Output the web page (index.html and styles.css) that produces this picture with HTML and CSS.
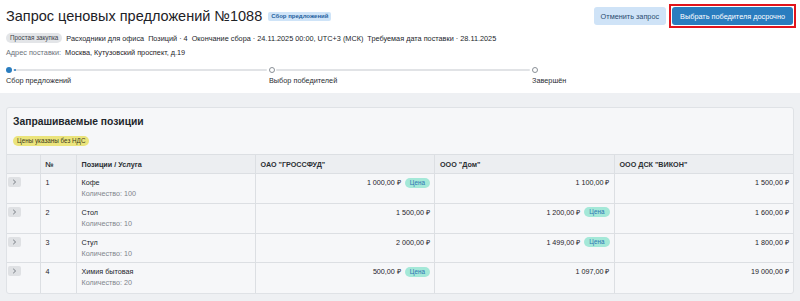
FILE: index.html
```html
<!DOCTYPE html>
<html lang="ru">
<head>
    <meta charset="UTF-8">
    <meta name="viewport" content="width=device-width, initial-scale=1.0">
    <title>Запрос ценовых предложений №1088</title>
    <link rel="stylesheet" href="styles.css">
</head>
<body>
    <div class="page-header">
        <div class="title-row">
            <div class="title-left">
                <h1>Запрос ценовых предложений №1088</h1>
                <span class="status-badge">Сбор предложений</span>
            </div>
            <div class="actions">
                <button class="btn btn-light">Отменить запрос</button>
                <span class="btn-outline"><button class="btn btn-primary">Выбрать победителя досрочно</button></span>
            </div>
        </div>

        <div class="meta-row">
            <span class="type-tag">Простая закупка</span>
            <span>Расходники для офиса</span>
            <span>Позиций · 4</span>
            <span>Окончание сбора · 24.11.2025 00:00, UTC+3 (МСК)</span>
            <span>Требуемая дата поставки · 28.11.2025</span>
        </div>

        <div class="address-row">
            <span class="muted">Адрес поставки:</span>
            <span>Москва, Кутузовский проспект, д.19</span>
        </div>

        <div class="stepper">
            <div class="step">
                <div class="step-track">
                    <span class="dot dot-active"></span>
                    <span class="line"><span class="line-progress"></span></span>
                </div>
                <div class="step-label">Сбор предложений</div>
            </div>
            <div class="step">
                <div class="step-track">
                    <span class="dot"></span>
                    <span class="line"></span>
                </div>
                <div class="step-label">Выбор победителей</div>
            </div>
            <div class="step step-last">
                <div class="step-track">
                    <span class="dot"></span>
                </div>
                <div class="step-label">Завершён</div>
            </div>
        </div>
    </div>

    <div class="content">
        <div class="card">
            <div class="card-head">
                <h2>Запрашиваемые позиции</h2>
                <span class="vat-badge">Цены указаны без НДС</span>
            </div>

            <table class="positions">
                <colgroup>
                    <col class="col-expand">
                    <col class="col-num">
                    <col class="col-item">
                    <col class="col-offer">
                    <col class="col-offer">
                    <col>
                </colgroup>
                <thead>
                    <tr>
                        <th></th>
                        <th>№</th>
                        <th>Позиции / Услуга</th>
                        <th>ОАО "ГРОССФУД"</th>
                        <th>ООО "Дом"</th>
                        <th>ООО ДСК "ВИКОН"</th>
                    </tr>
                </thead>
                <tbody>
                    <tr>
                        <td><span class="expand"><svg width="5" height="6" viewBox="0 0 5 6"><path d="M1.2 0.8 L3.6 3 L1.2 5.2" fill="none" stroke="#6a7078" stroke-width="0.9"/></svg></span></td>
                        <td>1</td>
                        <td><div class="item-name">Кофе</div><div class="item-qty">Количество: 100</div></td>
                        <td><div class="price"><span>1 000,00 ₽</span><span class="best">Цена</span></div></td>
                        <td><div class="price"><span>1 100,00 ₽</span></div></td>
                        <td><div class="price"><span>1 500,00 ₽</span></div></td>
                    </tr>
                    <tr>
                        <td><span class="expand"><svg width="5" height="6" viewBox="0 0 5 6"><path d="M1.2 0.8 L3.6 3 L1.2 5.2" fill="none" stroke="#6a7078" stroke-width="0.9"/></svg></span></td>
                        <td>2</td>
                        <td><div class="item-name">Стол</div><div class="item-qty">Количество: 10</div></td>
                        <td><div class="price"><span>1 500,00 ₽</span></div></td>
                        <td><div class="price"><span>1 200,00 ₽</span><span class="best">Цена</span></div></td>
                        <td><div class="price"><span>1 600,00 ₽</span></div></td>
                    </tr>
                    <tr>
                        <td><span class="expand"><svg width="5" height="6" viewBox="0 0 5 6"><path d="M1.2 0.8 L3.6 3 L1.2 5.2" fill="none" stroke="#6a7078" stroke-width="0.9"/></svg></span></td>
                        <td>3</td>
                        <td><div class="item-name">Стул</div><div class="item-qty">Количество: 10</div></td>
                        <td><div class="price"><span>2 000,00 ₽</span></div></td>
                        <td><div class="price"><span>1 499,00 ₽</span><span class="best">Цена</span></div></td>
                        <td><div class="price"><span>1 800,00 ₽</span></div></td>
                    </tr>
                    <tr>
                        <td><span class="expand"><svg width="5" height="6" viewBox="0 0 5 6"><path d="M1.2 0.8 L3.6 3 L1.2 5.2" fill="none" stroke="#6a7078" stroke-width="0.9"/></svg></span></td>
                        <td>4</td>
                        <td><div class="item-name">Химия бытовая</div><div class="item-qty">Количество: 20</div></td>
                        <td><div class="price"><span>500,00 ₽</span><span class="best">Цена</span></div></td>
                        <td><div class="price"><span>1 097,00 ₽</span></div></td>
                        <td><div class="price"><span>19 000,00 ₽</span></div></td>
                    </tr>
                </tbody>
            </table>
        </div>
    </div>
</body>
</html>
```

FILE: styles.css
```css
body {
    margin: 0;
    font-family: "Liberation Sans", Arial, sans-serif;
    color: #1f2329;
    background-color: #eef0f3;
}

.page-header {
    background-color: #ffffff;
    padding: 4px 4px 0 6px;
    height: 89px;
}

.title-row {
    display: flex;
    justify-content: space-between;
    align-items: flex-start;
}

.title-left {
    display: flex;
    align-items: center;
    gap: 6px;
    margin-top: 3px;
}

h1 {
    margin: 0;
    font-size: 14.5px;
    font-weight: 400;
    line-height: 18px;
    color: #1d2126;
}

.status-badge {
    background-color: #cfe4f8;
    color: #1f5f9e;
    font-size: 6px;
    font-weight: 700;
    line-height: 7px;
    padding: 1px 3px;
    border-radius: 2px;
}

.actions {
    display: flex;
    align-items: center;
    gap: 3px;
}

.btn {
    font-family: inherit;
    font-size: 7.3px;
    border: none;
    border-radius: 3px;
    height: 18px;
    padding: 0 8px;
    cursor: pointer;
}

.btn-light {
    background-color: #cfe3f7;
    color: #2b4c6f;
    padding: 0 7px;
}

.btn-primary {
    background-color: #2a7dbf;
    color: #ffffff;
}

.btn-outline {
    display: inline-flex;
    border: 2px solid #e1141c;
    padding: 1px;
}

.meta-row {
    display: flex;
    align-items: center;
    gap: 4px;
    font-size: 7.3px;
    line-height: 9px;
    margin-top: 5px;
    color: #22262b;
}

.type-tag {
    background-color: #e3e5e8;
    color: #3b4047;
    font-size: 6.3px;
    line-height: 8px;
    padding: 1px 4px;
    border-radius: 5px;
}

.address-row {
    display: flex;
    gap: 4px;
    font-size: 7.3px;
    line-height: 9px;
    margin-top: 5px;
}

.muted {
    color: #6c727a;
}

.stepper {
    display: flex;
    margin-top: 9px;
}

.step {
    flex: 0 0 263px;
}

.step-last {
    flex: 1;
}

.step-track {
    display: flex;
    align-items: center;
    height: 7px;
}

.dot {
    width: 4px;
    height: 4px;
    border-radius: 50%;
    border: 1px solid #8a9097;
    background-color: #ffffff;
    flex: none;
}

.dot-active {
    width: 6px;
    height: 6px;
    border: none;
    background-color: #2a7dbf;
}

.line {
    flex: 1;
    height: 2px;
    background-color: #e1e3e6;
    margin: 0 2px 0 1px;
    border-radius: 1px;
    position: relative;
}

.line-progress {
    position: absolute;
    left: 1px;
    top: 0;
    width: 2px;
    height: 2px;
    background-color: #2a7dbf;
    border-radius: 1px;
}

.step-label {
    font-size: 7.3px;
    line-height: 9px;
    margin-top: 3px;
    color: #2a2e33;
}

.content {
    padding: 14px 6px 0 6px;
}

.card {
    background-color: #f6f7f9;
    border: 1px solid #dfe2e6;
    border-radius: 3px;
    overflow: hidden;
}

.card-head {
    display: flex;
    flex-direction: column;
    align-items: flex-start;
    padding: 7px 6px 8px 6px;
}

h2 {
    margin: 0;
    font-size: 10.3px;
    font-weight: 700;
    line-height: 13px;
    color: #22262b;
}

.vat-badge {
    margin-top: 8px;
    background-color: #ebe47c;
    color: #3a3a1e;
    font-size: 6.3px;
    line-height: 8px;
    padding: 1px 4px;
    border-radius: 5px;
}

.positions {
    width: 100%;
    border-collapse: collapse;
    table-layout: fixed;
    font-size: 7.2px;
    line-height: 9px;
}

.col-expand {
    width: 33px;
}

.col-num {
    width: 36px;
}

.col-item {
    width: 179px;
}

.col-offer {
    width: 179.5px;
}

.positions th {
    background-color: #eceef1;
    text-align: left;
    font-weight: 700;
    height: 18px;
    padding: 0 5px;
    border-top: 1px solid #dcdfe3;
    border-left: 1px solid #dcdfe3;
    color: #2a2e33;
}

.positions td {
    vertical-align: top;
    height: 29.75px;
    padding: 4px 4px 0 5px;
    border-top: 1px solid #dcdfe3;
    border-left: 1px solid #dcdfe3;
    box-sizing: border-box;
}

.positions th:first-child,
.positions td:first-child {
    border-left: none;
    padding-left: 1px;
}

.positions td:first-child {
    padding-top: 3px;
}

.expand {
    display: flex;
    align-items: center;
    justify-content: center;
    width: 13px;
    height: 10px;
    background-color: #dfe1e4;
    border-radius: 2px;
}

.item-name {
    color: #22262b;
}

.item-qty {
    margin-top: 2px;
    color: #80858c;
}

.price {
    display: flex;
    justify-content: flex-end;
    align-items: center;
    gap: 4px;
    height: 9px;
}

.best {
    background-color: #a4e8d8;
    color: #2c74b3;
    font-size: 6.3px;
    line-height: 8px;
    padding: 1px 5px;
    border-radius: 5px;
}
```
